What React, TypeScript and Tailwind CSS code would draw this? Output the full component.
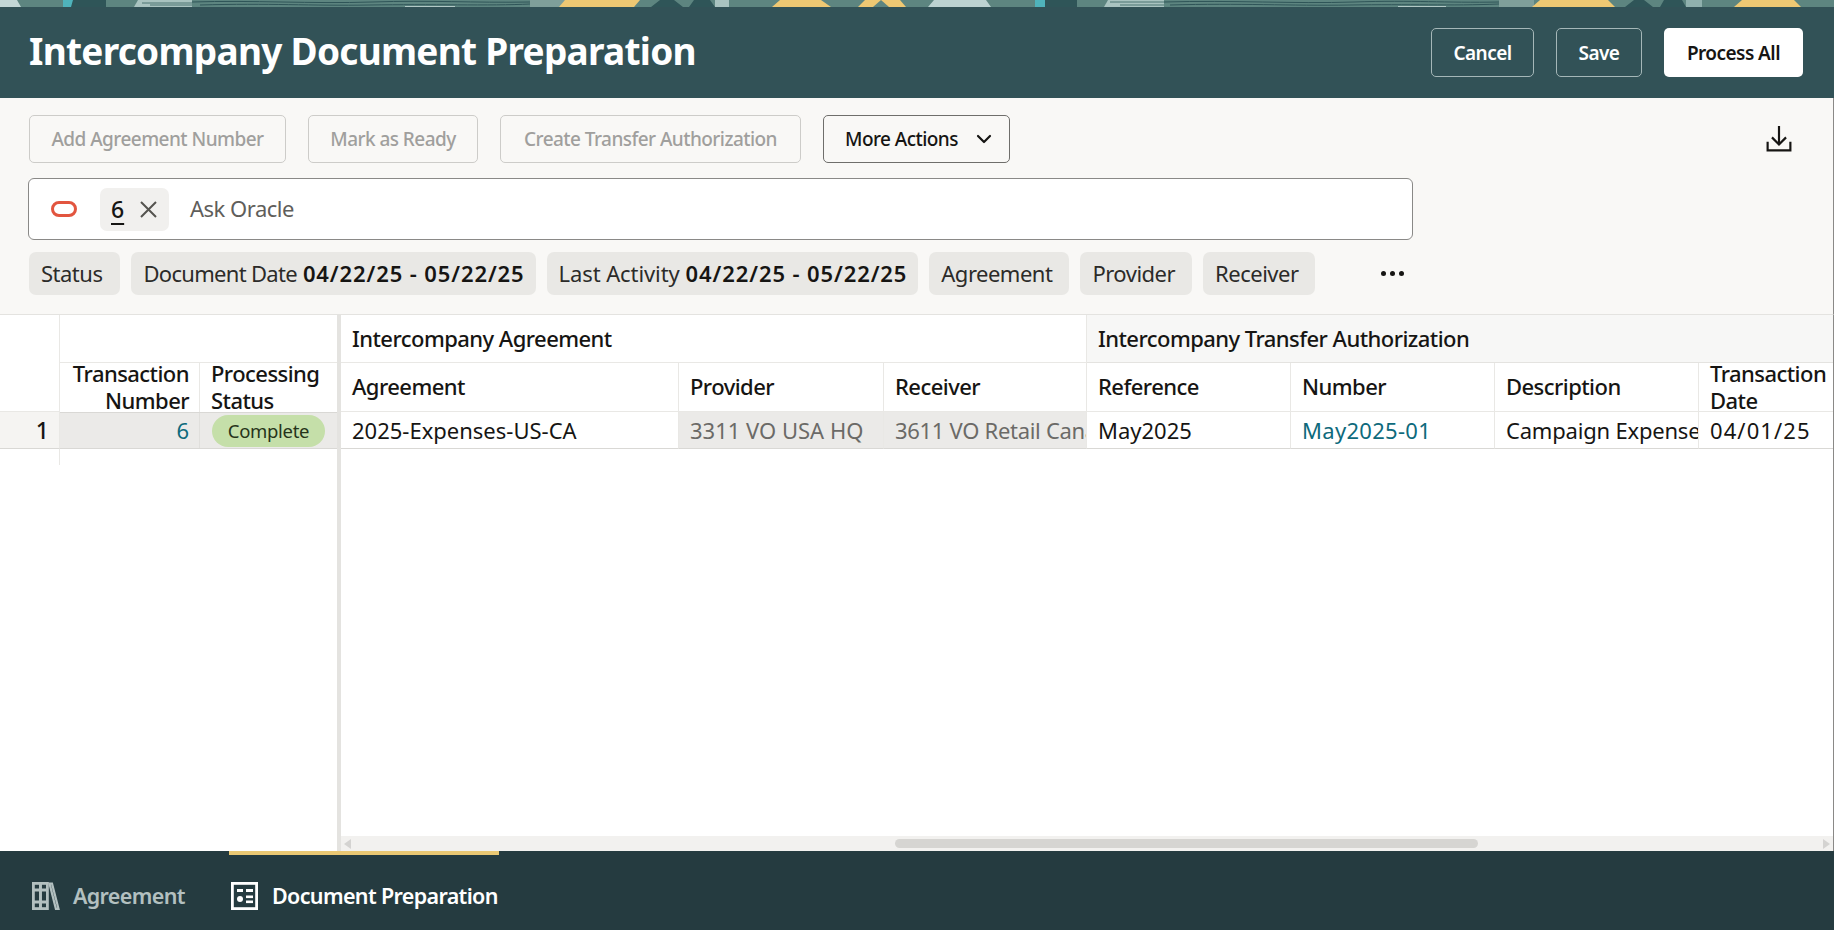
import type { ReactNode } from "react";
import { ChevronDown } from "lucide-react";

const FONT = "font-['Noto_Sans','Open_Sans',sans-serif]";

function Banner() {
    // torn paper strip along the top of the page
    return (
        <svg className="block h-[7px] w-full shrink-0" viewBox="0 0 1834 7" preserveAspectRatio="none">
            <rect width="1834" height="7" fill="#5d8580" />
            <path d="M0 0h17l4 7H0z" fill="#c3d7d6" />
            <rect x="63" width="10" height="7" fill="#4fb3bb" />
            <path d="M73 0h33v7H71z" fill="#2f5558" />
            <path d="M138 0h54v7h-58z" fill="#a9c3c0" />
            <path d="M142 3h50M150 5h42" stroke="#4d7472" strokeWidth="1" />
            <path d="M192 2c60-2 120 2 180 0s100 1 158 0M200 5c70-2 110 1 170 0s120 1 160-1" stroke="#2f5558" strokeWidth="1" fill="none" />
            <path d="M405 7h50" stroke="#cfe0de" strokeWidth="1.4" />
            <rect x="530" width="35" height="7" fill="#7f9f9a" />
            <path d="M559 7l6-7h75l-6 7z" fill="#eec873" />
            <path d="M651 7l9-7h14l9 7zM689 7l5-7h16l5 7z" fill="#2f5558" />
            <rect x="715" width="14" height="7" fill="#a9c3c0" />
            <path d="M772 7l8-7h41l10 7z" fill="#eec873" />
            <path d="M858 7l7-7h35l6 7z" fill="#eec873" />
            <path d="M873 7l8-7 8 7z" fill="#5d8580" />
            <path d="M928 7l6-7h52l5 7z" fill="#bcd2d1" />
            <rect x="1035" width="10" height="7" fill="#4fb3bb" />
            <rect x="1045" width="32" height="7" fill="#2f5558" />
            <path d="M1104 7l4-7h56v7z" fill="#a9c3c0" />
            <path d="M1110 2h54M1120 5h44" stroke="#4d7472" strokeWidth="1" />
            <path d="M1164 2c70-2 130 2 190 0s90 1 145 0M1170 5c70-2 120 1 180 0s100 1 149-1" stroke="#2f5558" strokeWidth="1" fill="none" />
            <path d="M1398 7h48" stroke="#cfe0de" strokeWidth="1.4" />
            <rect x="1499" width="35" height="7" fill="#7f9f9a" />
            <path d="M1532 7l8-7h68l7 7z" fill="#eec873" />
            <path d="M1625 7l9-7h10l9 7zM1660 7l4-7h18l4 7z" fill="#2f5558" />
            <rect x="1686" width="16" height="7" fill="#8fb0ad" />
            <path d="M1734 7l8-7h52l7 7z" fill="#eec873" />
        </svg>
    );
}

function HeaderButton({ label, white }: { label: string; white?: boolean }) {
    const look = white ? "bg-white text-[#161513] px-[23px]" : "border border-[#a5b7b8] text-white px-[21.5px]";
    return <button className={`h-[49px] whitespace-nowrap rounded-[5px] pt-[2px] text-[19px] font-semibold tracking-[-0.55px] ${look}`}>{label}</button>;
}

function ToolButton({ label, width }: { label: string; width: string }) {
    return (
        <button className={`h-[48px] whitespace-nowrap rounded-[5px] border border-[#cdccc9] text-[19px] font-medium tracking-[-0.55px] text-[#a09f9d] ${width}`}>
            {label}
        </button>
    );
}

function Chip({ label, value, labelClass = "tracking-[-0.5px]", padRight = "pr-[17px]" }: { label: string; value?: string; labelClass?: string; padRight?: string }) {
    return (
        <div className={`flex h-[43px] items-center whitespace-nowrap rounded-[7px] bg-[#e9e8e5] pl-3 text-[22px] text-[#2c2b29] ${padRight}`}>
            <span className={labelClass}>{label}</span>
            {value && <b className="ml-[6px] font-semibold tracking-[0.9px] text-[#161513]">{value}</b>}
        </div>
    );
}

function HeadCell({ children, className = "" }: { children: ReactNode; className?: string }) {
    return (
        <div className={`flex items-center border-r border-[#e9e8e5] text-[22px] font-medium leading-[27px] tracking-[-0.55px] text-[#161513] ${className}`}>
            {children}
        </div>
    );
}

function Column({ width, head, children, cellClass = "text-[#161513]" }: { width: string; head: ReactNode; children: ReactNode; cellClass?: string }) {
    return (
        <div className={`flex shrink-0 flex-col ${width}`}>
            <HeadCell className="h-[49px] border-b pb-[2px] pl-[11px]">{head}</HeadCell>
            <div className={`flex h-[37px] items-center overflow-hidden whitespace-nowrap border-b border-r border-b-[#d9d8d5] border-r-[#e9e8e5] pl-[11px] text-[22px] ${cellClass}`}>
                {children}
            </div>
        </div>
    );
}

export default function App() {
    return (
        <div className={`flex h-[930px] w-[1834px] flex-col overflow-hidden bg-white ${FONT}`}>
            <Banner />

            <header className="flex h-[91px] shrink-0 items-center justify-between bg-[#325257] pl-[29px] pr-[31px]">
                <h1 className="pb-[4px] text-[37px] font-bold tracking-[-0.73px] text-white">Intercompany Document Preparation</h1>
                <div className="flex items-center gap-[22px]">
                    <HeaderButton label="Cancel" />
                    <HeaderButton label="Save" />
                    <HeaderButton label="Process All" white />
                </div>
            </header>

            <section className="flex h-[217px] shrink-0 flex-col border-b border-r border-[#e4e3e0] border-r-[#8a8987] bg-[#f9f8f6] pl-[29px] pr-[28px] pt-[17px]">
                <div className="flex items-center gap-[22px]">
                    <ToolButton label="Add Agreement Number" width="w-[257px]" />
                    <ToolButton label="Mark as Ready" width="w-[170px]" />
                    <ToolButton label="Create Transfer Authorization" width="w-[301px]" />
                    <button className="flex h-[48px] items-center gap-[14px] whitespace-nowrap rounded-[5px] border border-[#6f6e6b] pl-[21px] pr-[13px] text-[19px] font-medium tracking-[-0.55px] text-[#161513]">
                        More Actions
                        <ChevronDown size={24} strokeWidth={2.2} />
                    </button>
                    <svg className="ml-auto mr-[13px] h-[26px] w-[26px] text-[#161513]" viewBox="0 0 24 24" fill="none" stroke="currentColor" strokeWidth="2">
                        <path d="M12 0v16.5M5.5 10.5l6.5 6.5 6.5-6.5" />
                        <path d="M1.5 14.5v8h21v-8" />
                    </svg>
                </div>

                <div className="-ml-px mt-[15px] flex h-[62px] w-[1385px] items-center rounded-[6px] border border-[#8a8987] bg-white pl-[22px]">
                    <svg width="26" height="18" viewBox="0 0 26 18" fill="none" className="shrink-0">
                        <rect x="1.5" y="2.5" width="23" height="13" rx="6.5" stroke="#e2553f" strokeWidth="3" />
                    </svg>
                    <div className="ml-[23px] flex h-[43px] w-[69px] items-center rounded-[7px] bg-[#f1f0ee] pl-[11px] text-[23px] font-medium text-[#161513]">
                        <span className="underline decoration-2 underline-offset-[5px]">6</span>
                        <svg width="17" height="17" viewBox="0 0 17 17" className="ml-[16px] text-[#55544f]" stroke="currentColor" strokeWidth="2" fill="none">
                            <path d="M1 1l15 15M16 1L1 16" />
                        </svg>
                    </div>
                    <span className="ml-[21px] pb-[1px] text-[22px] tracking-[-0.5px] text-[#5f5e5b]">Ask Oracle</span>
                </div>

                <div className="mt-[12px] flex items-center gap-[11px]">
                    <Chip label="Status" padRight="pr-[18px]" />
                    <Chip label="Document Date" value="04/22/25 - 05/22/25" labelClass="tracking-[-0.7px]" padRight="pr-[11px]" />
                    <Chip label="Last Activity" value="04/22/25 - 05/22/25" labelClass="tracking-[-0.1px]" padRight="pr-[11px]" />
                    <Chip label="Agreement" />
                    <Chip label="Provider" />
                    <Chip label="Receiver" padRight="pr-[16px]" />
                    <div className="ml-[55px] flex gap-[4px]">
                        <i className="h-[5px] w-[5px] rounded-full bg-[#161513]" />
                        <i className="h-[5px] w-[5px] rounded-full bg-[#161513]" />
                        <i className="h-[5px] w-[5px] rounded-full bg-[#161513]" />
                    </div>
                </div>
            </section>

            <main className="flex min-h-0 flex-1 border-r border-[#8a8987]">
                {/* frozen columns */}
                <div className="flex w-[341px] shrink-0 border-r-[4px] border-[#e4e3e0]">
                    <div className="w-[60px] shrink-0">
                        <div className="h-[97px] border-b border-r border-[#e9e8e5]" />
                        <div className="flex h-[37px] items-center justify-end border-b border-r border-b-[#d9d8d5] border-r-[#e9e8e5] bg-[#f5f4f2] pr-[10px] text-[23px] font-medium text-[#161513]">
                            1
                        </div>
                        <div className="h-[16px] border-r border-[#e9e8e5]" />
                    </div>
                    <div className="flex flex-1 flex-col">
                        <div className="h-[48px] border-b border-[#e9e8e5]" />
                        <div className="flex h-[49px]">
                            <HeadCell className="w-[140px] justify-end pb-[2px] pr-[10px] text-right">
                                Transaction
                                <br />
                                Number
                            </HeadCell>
                            <HeadCell className="flex-1 border-r-0 pb-[2px] pl-[11px]">
                                Processing
                                <br />
                                Status
                            </HeadCell>
                        </div>
                        <div className="flex h-[37px] border-b border-t border-[#d9d8d5] bg-[#ebeae8]">
                            <div className="flex w-[140px] items-center justify-end border-r border-[#e0dfdc] pr-[10px] text-[22px] text-[#0e6a7c]">6</div>
                            <div className="flex flex-1 items-center pl-[12px]">
                                <span className="flex h-[32px] w-[113px] items-center justify-center rounded-full bg-[#c5dfa9] text-[18.5px] tracking-[-0.3px] text-[#25331a]">Complete</span>
                            </div>
                        </div>
                    </div>
                </div>

                {/* scrolling columns */}
                <div className="flex min-w-0 flex-1 flex-col overflow-hidden">
                    <div className="flex h-[48px] shrink-0">
                        <HeadCell className="w-[746px] border-b pl-[11px]">Intercompany Agreement</HeadCell>
                        <HeadCell className="flex-1 border-b border-r-0 border-b-[#e4e3e0] bg-[#f7f7f6] pl-[11px]">Intercompany Transfer Authorization</HeadCell>
                    </div>
                    <div className="flex">
                        <Column width="w-[338px]" head="Agreement">2025-Expenses-US-CA</Column>
                        <Column width="w-[205px]" head="Provider" cellClass="bg-[#ebeae8] text-[#6b6a67]">3311 VO USA HQ</Column>
                        <Column width="w-[203px]" head="Receiver" cellClass="bg-[#ebeae8] tracking-[-0.3px] text-[#6b6a67]">3611 VO Retail Canada</Column>
                        <Column width="w-[204px]" head="Reference">May2025</Column>
                        <Column width="w-[204px]" head="Number" cellClass="tracking-[0.3px] text-[#0e6a7c]">May2025-01</Column>
                        <Column width="w-[204px]" head="Description" cellClass="tracking-[-0.2px] text-[#161513]">Campaign Expenses</Column>
                        <Column width="w-[135px]" head={<span className="whitespace-nowrap pt-[2px]">Transaction<br />Date</span>} cellClass="tracking-[1.1px] text-[#161513]">04/01/25</Column>
                    </div>
                    <div className="flex-1" />
                    <div className="flex h-[15px] shrink-0 items-center bg-[#f2f1ef] px-[3px]">
                        <span className="h-0 w-0 border-y-[5px] border-r-[7px] border-y-transparent border-r-[#d4d3d1]" />
                        <div className="ml-[544px] h-[9px] w-[583px] rounded-full bg-[#d6d5d2]" />
                        <span className="ml-auto h-0 w-0 border-y-[5px] border-l-[7px] border-y-transparent border-l-[#d4d3d1]" />
                    </div>
                </div>
            </main>

            <footer className="flex h-[79px] shrink-0 bg-[#253b40] pl-[32px]">
                <div className="flex w-[197px] shrink-0 items-center whitespace-nowrap pt-[11px] text-[21.5px] font-semibold tracking-[-0.65px] text-[#b3c0c0]">
                    <svg width="28" height="28" viewBox="0 0 28 28" fill="none" stroke="currentColor" strokeWidth="2.8">
                        <rect x="1.4" y="1.4" width="7" height="25.2" />
                        <rect x="8.4" y="1.4" width="7" height="25.2" />
                        <path d="M1.4 8h14M1.4 20h14" />
                        <path d="M17.5 1.5h2.5l6.5 25.3h-2.6z" strokeWidth="2.2" />
                    </svg>
                    <span className="ml-[13px]">Agreement</span>
                </div>
                <div className="flex w-[270px] shrink-0 items-center whitespace-nowrap border-t-[4px] border-[#eac874] pt-[7px] text-[21.5px] font-semibold tracking-[-0.65px] text-white">
                    <svg width="27" height="28" viewBox="0 0 27 28" fill="none" className="ml-[2px] shrink-0">
                        <rect x="1.4" y="1.4" width="24.2" height="25.2" stroke="currentColor" strokeWidth="2.8" />
                        <rect x="6" y="7" width="6" height="3" fill="currentColor" />
                        <rect x="15" y="7" width="7" height="3" fill="currentColor" />
                        <circle cx="9" cy="17" r="3" fill="currentColor" />
                        <rect x="15" y="13.5" width="7" height="2.6" fill="currentColor" />
                        <rect x="15" y="18.5" width="7" height="2.6" fill="currentColor" />
                    </svg>
                    <span className="ml-[14px]">Document Preparation</span>
                </div>
            </footer>
        </div>
    );
}
